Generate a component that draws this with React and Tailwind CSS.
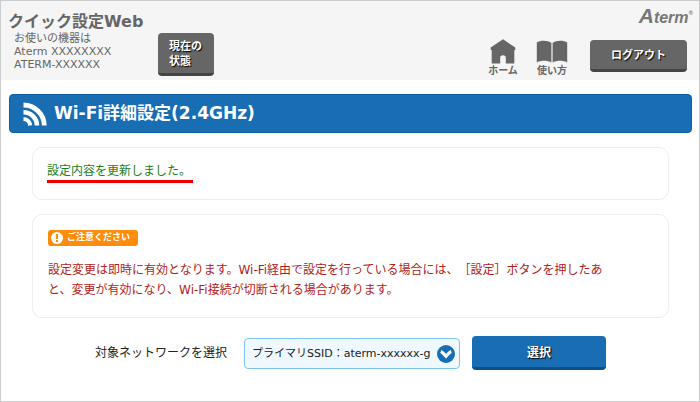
import React, { useState } from 'react';

const HomeIcon = () => (
    <svg viewBox="0 0 26 25" className="w-[26px] h-[25px]" fill="#666" aria-hidden="true">
        <path d="M13 0.3 L25.3 8.5 V11 H24.3 V24.5 H15.8 V19 a2.8 2.8 0 0 0 -5.6 0 V24.5 H1.7 V11 H0.7 V8.5 Z" />
    </svg>
);

const BookIcon = () => (
    <svg viewBox="0 0 32 25" className="w-8 h-[25px]" fill="#666" aria-hidden="true">
        <path d="M0.8 3.4 C4 1.2 12 1 15.4 4 V23.6 C12 21.4 5 21.2 0.8 23.4 Z" />
        <path d="M31.2 3.4 C28 1.2 20 1 16.6 4 V23.6 C20 21.4 27 21.2 31.2 23.4 Z" />
    </svg>
);

const WifiIcon = () => (
    <svg viewBox="0 0 24 24" className="w-6 h-6" fill="none" stroke="#fff" aria-hidden="true">
        <path d="M0.5 3 A21 21 0 0 1 21.3 23.5" strokeWidth="4.8" />
        <path d="M0.5 10.2 A13.6 13.6 0 0 1 14 23.5" strokeWidth="4.6" />
        <path d="M0.5 17 A7 7 0 0 1 7.2 23.5" strokeWidth="4.2" />
    </svg>
);

const networks = ['プライマリSSID：aterm-xxxxxx-g', 'セカンダリSSID：aterm-xxxxxx-gw'];

const Header = () => (
    <header className="flex justify-between bg-[#f5f5f5] h-[79px] pl-[7px] pr-1.5 text-[#666]">
        <div className="flex">
            <div className="w-[150px] pt-[11px]">
                <h1 className="text-[16px] leading-[20px] font-bold whitespace-nowrap">クイック設定Web</h1>
                <p className="pl-1.5 text-[11px] leading-[13px] whitespace-nowrap">
                    お使いの機器は<br />
                    Aterm XXXXXXXX<br />
                    ATERM-XXXXXX
                </p>
            </div>
            <button
                type="button"
                className="self-start mt-8 w-14 h-[43px] pl-[11px] pt-0.5 text-left rounded-[4px] bg-[#666] border-b-3 border-[#444] text-white text-[11px] leading-[15px] font-bold [text-shadow:1px_1px_1px_#000]"
            >
                現在の<br />状態
            </button>
        </div>
        <div className="flex flex-col items-end">
            <div className="h-[38px] pt-1 font-['Liberation_Sans'] font-bold italic text-[#777] leading-[22px] text-[16px]">
                <span className="text-[21px]">A</span>term<sup className="text-[6px] -top-2">®</sup>
            </div>
            <nav className="flex items-start pr-1.5">
                <a href="#home" className="flex flex-col items-center gap-px w-[42px] text-[10px] leading-[12px] font-bold">
                    <HomeIcon />
                    ホーム
                </a>
                <a href="#help" className="flex flex-col items-center gap-px w-14 text-[10px] leading-[12px] font-bold">
                    <BookIcon />
                    使い方
                </a>
                <button
                    type="button"
                    className="ml-2.5 mt-px w-[97px] h-8 pt-1 rounded-[4px] bg-[#666] border-b-3 border-[#444] text-white text-[11px] font-bold [text-shadow:1px_1px_1px_#000]"
                >
                    ログアウト
                </button>
            </nav>
        </div>
    </header>
);

const App = () => {
    const [network, setNetwork] = useState(networks[0]);

    return (
        <div className="min-h-screen bg-white border border-[#ccc] font-['DejaVu_Sans','Noto_Sans_CJK_JP',sans-serif] [text-spacing-trim:space-all]">
            <Header />

            <main className="pl-2 pr-[7px] pt-3.5">
                <h2 className="flex items-center gap-[7px] h-[39px] pl-[13px] rounded-[4px] bg-[#186db3] border border-[#0c61a8] text-white text-[17px] font-bold">
                    <WifiIcon />
                    Wi-Fi詳細設定(2.4GHz)
                </h2>

                <div className="px-[23px]">
                    <section className="mt-3.5 h-[53px] px-3.5 pt-[15px] rounded-[10px] border border-[#eee]">
                        <p className="w-fit pr-0.5 text-[12px] leading-[17px] text-[#227d22] border-b-3 border-[#f00000]">
                            設定内容を更新しました。
                        </p>
                    </section>

                    <section className="mt-3.5 px-[15px] pt-[15px] pb-[17px] rounded-[10px] border border-[#eee]">
                        <div className="flex items-center gap-1 h-4 w-[90px] pl-[3px] rounded-[3px] bg-[#ff8c0a] text-white text-[9px] font-bold whitespace-nowrap">
                            <svg viewBox="0 0 12 12" className="w-3 h-3 shrink-0" aria-hidden="true">
                                <circle cx="6" cy="6" r="6" fill="#fff" />
                                <rect x="5" y="2" width="2" height="5" fill="#ff8c0a" />
                                <rect x="5" y="8" width="2" height="2" fill="#ff8c0a" />
                            </svg>
                            ご注意ください
                        </div>
                        <p className="mt-3.5 text-[12px] leading-[20px] text-[#b01c1c]">
                            設定変更は即時に有効となります。Wi-Fi経由で設定を行っている場合には、［設定］ボタンを押したあ<br />
                            と、変更が有効になり、Wi-Fi接続が切断される場合があります。
                        </p>
                    </section>
                </div>

                <form className="flex items-center justify-center gap-3 mt-[18px]" onSubmit={(e) => e.preventDefault()}>
                    <label htmlFor="network" className="w-[137px] text-[12px] text-[#222]">対象ネットワークを選択</label>
                    <div className="relative">
                        <select
                            id="network"
                            value={network}
                            onChange={(e) => setNetwork(e.target.value)}
                            className="block appearance-none w-[216px] h-[31px] pl-[7px] pr-6 pt-0.5 rounded-[4px] border border-[#7fc4f0] bg-[#f0f8ff] text-[11px] text-[#222]"
                        >
                            {networks.map((n) => (
                                <option key={n} value={n}>{n}</option>
                            ))}
                        </select>
                        <svg viewBox="0 0 18 18" className="absolute right-[5px] top-[7px] w-[18px] h-[18px] pointer-events-none" aria-hidden="true">
                            <circle cx="9" cy="9" r="9" fill="#186db3" />
                            <path d="M3.8 6.5 C5.5 7.2 7.5 9.5 9 11.3 C10.5 9.5 12.5 7.2 14.2 6.5" fill="none" stroke="#fff" strokeWidth="3" />
                        </svg>
                    </div>
                    <button
                        type="submit"
                        className="w-[134px] h-[34px] pt-0.5 rounded-[4px] bg-[#186db3] border-b-3 border-[#0e4f87] text-white text-[12px] font-bold [text-shadow:1px_1px_1px_#000]"
                    >
                        選択
                    </button>
                </form>
            </main>
        </div>
    );
};

export default App;
